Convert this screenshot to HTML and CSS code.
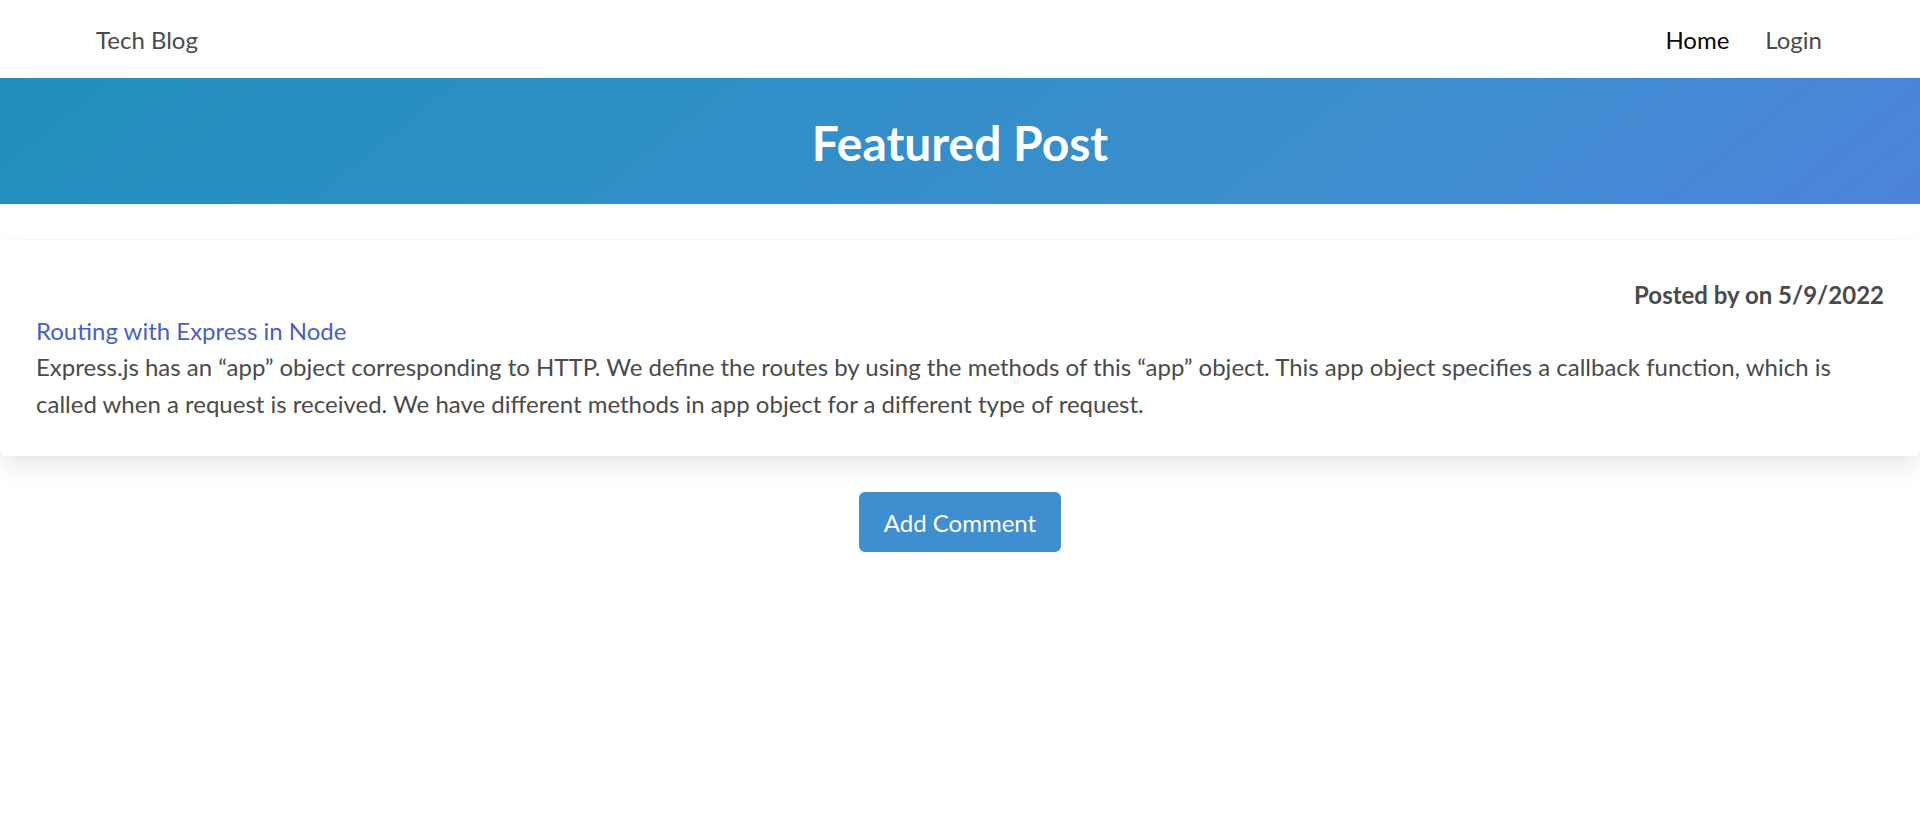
FILE: index.html
```html
<!DOCTYPE html>
<html lang="en">
<head>
<meta charset="utf-8">
<title>Tech Blog</title>
<link rel="stylesheet" href="styles.css">
</head>
<body>
<nav class="navbar">
  <a class="navbar-item brand" href="#">Tech Blog</a>
  <div class="navbar-end">
    <a class="navbar-item active" href="#">Home</a>
    <a class="navbar-item" href="#">Login</a>
  </div>
</nav>
<section class="hero">
  <h1 class="hero-title">Featured Post</h1>
</section>
<main class="main">
  <article class="card">
    <p class="meta">Posted by  on 5/9/2022</p>
    <a class="post-title" href="#">Routing with Express in Node</a>
    <p class="post-body">Express.js has an “app” object corresponding to HTTP. We define the routes by using the methods of this “app” object. This app object specifies a callback function, which is called when a request is received. We have different methods in app object for a different type of request.</p>
  </article>
  <div class="actions">
    <button class="button" type="button">Add Comment</button>
  </div>
</main>
</body>
</html>
```
FILE: styles.css
```css
* { box-sizing: border-box; }
html, body { margin: 0; padding: 0; }
body {
  font-family: Lato, "Open Sans", sans-serif;
  font-size: 24px;
  line-height: 36px;
  color: #4a4a4a;
  background: #fff;
}
a { text-decoration: none; }
p { margin: 0; }

.navbar {
  height: 78px;
  display: flex;
  align-items: center;
  justify-content: space-between;
  padding: 1px 80px 0 78px;
  background: #fff;
}
.navbar-end { display: flex; align-items: center; }
.navbar-item {
  display: block;
  padding: 12px 18px;
  color: #4a4a4a;
  line-height: 36px;
}
.navbar-item.active { color: #0a0a0a; }

.hero {
  background-color: #3e8ed0;
  background-image: linear-gradient(141deg, #2090bb 0%, #3e8ed0 71%, #4d83da 100%);
  padding: 38px 36px 34px;
  text-align: center;
}
.hero-title {
  margin: 0;
  color: #fff;
  font-size: 48px;
  line-height: 54px;
  font-weight: 700;
}

.main { padding-top: 36px; }
.card {
  background: #fff;
  border-radius: 6px;
  box-shadow: 0 12px 24px -3px rgba(10, 10, 10, 0.1), 0 0 0 1px rgba(10, 10, 10, 0.02);
  padding: 37px 36px 34px;
}
.meta {
  text-align: right;
  font-weight: 700;
}
.post-title {
  display: block;
  color: #485fc7;
}
.post-body { line-height: 36.5px; }
.actions {
  display: flex;
  justify-content: center;
  padding-top: 36px;
}
.button {
  font-family: inherit;
  font-size: 24px;
  line-height: 36px;
  height: 60px;
  padding: 12px 24px 10px;
  border: 1px solid transparent;
  border-radius: 6px;
  background: #3e8ed0;
  color: #fff;
  cursor: pointer;
}
```
